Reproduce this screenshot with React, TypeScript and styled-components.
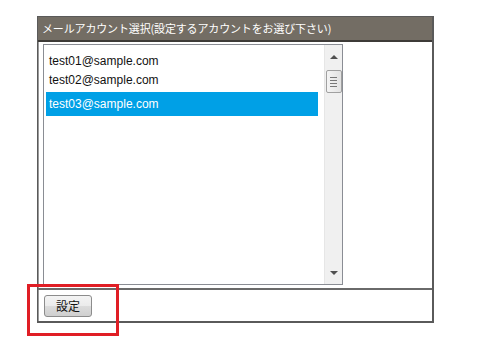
import React from "react";
import styled, { createGlobalStyle } from "styled-components";

const Global = createGlobalStyle`
  html, body { margin: 0; padding: 0; background: #fff; }
  body { font-family: "Liberation Sans", Arial, "Noto Sans CJK JP", sans-serif; }
`;

const Page = styled.div`
  position: relative;
  width: 504px;
  height: 350px;
  padding: 16px 0 0 37px;
  box-sizing: border-box;
`;

const Panel = styled.div`
  width: 397px;
  height: 307px;
  box-sizing: border-box;
  border: 1px solid #5a5a5a;
  border-right-width: 2px;
  border-bottom-width: 2px;
  box-shadow: inset 1px 0 0 #a8a8a8;
  display: flex;
  flex-direction: column;
`;

const Header = styled.div`
  height: 23px;
  background: #736d64;
  border-bottom: 2px solid #3e3b38;
  color: #fff;
  font-family: "Noto Sans CJK JP", sans-serif;
  font-size: 11px;
  letter-spacing: -0.15px;
  line-height: 23px;
  padding-left: 4px;
  white-space: nowrap;
`;

const Body = styled.div`
  flex: 1;
  padding: 2px 0 0 5px;
  border-bottom: 2px solid #6a6a6a;
  box-shadow: inset 1px 0 0 #9a9a9a;
`;

const ListBox = styled.div`
  width: 300px;
  height: 241px;
  box-sizing: border-box;
  border: 1px solid #8a8d94;
  display: flex;
`;

const Options = styled.div`
  flex: 1;
  padding: 7px 6px 0 2px;
  display: flex;
  flex-direction: column;
`;

const Option = styled.div<{ $selected?: boolean }>`
  height: ${(p) => (p.$selected ? 24 : 19)}px;
  line-height: ${(p) => (p.$selected ? 24 : 19)}px;
  margin-top: ${(p) => (p.$selected ? 2 : 0)}px;
  padding-left: 3px;
  font-size: 12px;
  color: ${(p) => (p.$selected ? "#fff" : "#111")};
  background: ${(p) => (p.$selected ? "#00a0e6" : "transparent")};
`;

const ScrollBar = styled.div`
  width: 17px;
  background: #f0f0f0;
  border-left: 1px solid #e6e6e6;
  display: flex;
  flex-direction: column;
  align-items: center;
  padding-bottom: 3px;
`;

const Arrow = styled.div<{ $down?: boolean }>`
  height: 17px;
  width: 17px;
  display: flex;
  align-items: center;
  justify-content: center;
  margin-top: ${(p) => (p.$down ? "auto" : "3px")};
  &::after {
    content: "";
    width: 0;
    height: 0;
    border-left: 4px solid transparent;
    border-right: 4px solid transparent;
    ${(p) =>
      p.$down
        ? "border-top: 4px solid #505050;"
        : "border-bottom: 4px solid #505050;"}
  }
`;

const Thumb = styled.div`
  margin-top: 5px;
  width: 16px;
  height: 23px;
  box-sizing: border-box;
  border: 1px solid #a0a0a0;
  border-radius: 2px;
  background: linear-gradient(to right, #f4f4f4, #e2e2e2);
  display: flex;
  flex-direction: column;
  align-items: center;
  justify-content: center;
  gap: 2px;
`;

const Grip = styled.span`
  display: block;
  width: 7px;
  height: 1px;
  background: #777;
`;

const Footer = styled.div`
  height: 31px;
  padding: 5px 0 0 6px;
  box-sizing: border-box;
  box-shadow: inset 1px 0 0 #9a9a9a;
`;

const Button = styled.button`
  width: 48px;
  height: 22px;
  box-sizing: border-box;
  border: 1px solid #8c8c8c;
  border-radius: 3px;
  background: linear-gradient(to bottom, #f4f4f4 0%, #ebebeb 50%, #dcdcdc 51%, #cfcfcf 100%);
  font-family: "Noto Sans CJK JP", sans-serif;
  font-size: 12px;
  color: #111;
  padding: 0;
  line-height: 20px;
`;

const Highlight = styled.div`
  position: absolute;
  left: 27px;
  top: 284px;
  width: 92px;
  height: 52px;
  box-sizing: border-box;
  border: 3px solid #e01e25;
  pointer-events: none;
`;

const accounts = ["test01@sample.com", "test02@sample.com", "test03@sample.com"];

export default function App() {
  return (
    <Page>
      <Global />
      <Panel>
        <Header>メールアカウント選択(設定するアカウントをお選び下さい)</Header>
        <Body>
          <ListBox>
            <Options>
              {accounts.map((a, i) => (
                <Option key={a} $selected={i === 2}>
                  {a}
                </Option>
              ))}
            </Options>
            <ScrollBar>
              <Arrow />
              <Thumb>
                <Grip />
                <Grip />
                <Grip />
                <Grip />
              </Thumb>
              <Arrow $down />
            </ScrollBar>
          </ListBox>
        </Body>
        <Footer>
          <Button>設定</Button>
        </Footer>
      </Panel>
      <Highlight />
    </Page>
  );
}
